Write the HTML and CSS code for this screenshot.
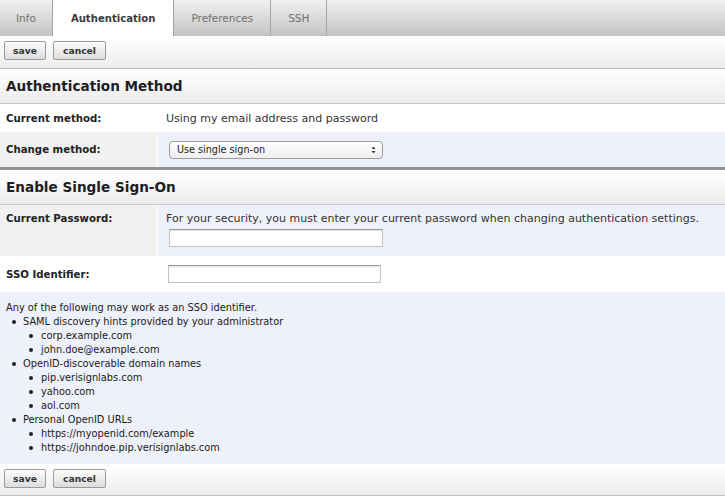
FILE: index.html
```html
<!DOCTYPE html>
<html>
<head>
<meta charset="utf-8">
<link rel="stylesheet" href="styles.css">
</head>
<body>
<div class="tabs">
  <div class="tab">Info</div>
  <div class="tab active">Authentication</div>
  <div class="tab">Preferences</div>
  <div class="tab">SSH</div>
</div>
<div class="bar">
  <button class="btn">save</button>
  <button class="btn">cancel</button>
</div>

<div class="head">Authentication Method</div>
<div class="rows">
  <div class="lbl r-method">Current method:</div>
  <div class="val r-method">Using my email address and password</div>
  <div class="lbl shade r-change">Change method:</div>
  <div class="val blue r-change">
    <div class="select">
      <span>Use single sign-on</span>
      <svg class="arrows" width="5" height="8" viewBox="0 0 5 8"><path d="M0.5 3 L2.5 0.5 L4.5 3 Z M0.5 5 L2.5 7.5 L4.5 5 Z" fill="#444"/></svg>
    </div>
  </div>
</div>
<div class="sep"></div>

<div class="head">Enable Single Sign-On</div>
<div class="rows">
  <div class="lbl shade r-pass">Current Password:</div>
  <div class="val blue r-pass">
    <div class="note">For your security, you must enter your current password when changing authentication settings.</div>
    <input class="field f-pass" type="password">
  </div>
  <div class="lbl r-sso">SSO Identifier:</div>
  <div class="val r-sso"><input class="field f-sso" type="text"></div>
</div>

<div class="info">
  <div>Any of the following may work as an SSO identifier.</div>
  <ul class="l1">
    <li>SAML discovery hints provided by your administrator
      <ul class="l2">
        <li>corp.example.com</li>
        <li>john.doe@example.com</li>
      </ul>
    </li>
    <li>OpenID-discoverable domain names
      <ul class="l2">
        <li>pip.verisignlabs.com</li>
        <li>yahoo.com</li>
        <li>aol.com</li>
      </ul>
    </li>
    <li>Personal OpenID URLs
      <ul class="l2">
        <li>https://myopenid.com/example</li>
        <li>https://johndoe.pip.verisignlabs.com</li>
      </ul>
    </li>
  </ul>
</div>

<div class="bar bottom">
  <button class="btn">save</button>
  <button class="btn">cancel</button>
</div>
</body>
</html>
```

FILE: styles.css
```css
html, body {
  margin: 0;
  padding: 0;
  background: #fff;
}
body {
  font-family: "DejaVu Sans", "Lucida Grande", sans-serif;
  color: #222;
  width: 725px;
}

/* tabs */
.tabs {
  display: flex;
  height: 36px;
  background: linear-gradient(#f1f1f1, #c3c3c3);
}
.tab {
  display: flex;
  align-items: center;
  justify-content: center;
  padding: 0 17px;
  font-size: 10.5px;
  color: #707070;
  border-right: 1px solid #a3a3a3;
}
.tab:first-child {
  padding: 0 16px 0 16px;
}
.tab.active {
  background: #fff;
  color: #3a3a3a;
  font-weight: bold;
  font-size: 10.1px;
  padding: 0 18px;
}

/* button bars */
.bar {
  box-sizing: border-box;
  padding: 5px 4px 0;
  display: flex;
  gap: 7px;
  align-items: flex-start;
  background: linear-gradient(#fff, #ededed);
  border-bottom: 1px solid #bdbdbd;
  height: 33px;
}
.bar.bottom {
  height: 32px;
}
.btn {
  height: 19px;
  margin: 0;
  padding: 0 8px;
  font-family: "DejaVu Sans", sans-serif;
  font-weight: bold;
  font-size: 9.2px;
  color: #333;
  background: linear-gradient(#fdfdfd, #dcdcdc);
  border: 1px solid #9a9a9a;
  border-radius: 2px;
  box-shadow: 0 1px 0 rgba(255,255,255,0.8) inset;
}
.btn:first-child { width: 42px; }
.btn:last-child { width: 53px; }

/* section headers */
.head {
  height: 34px;
  display: flex;
  align-items: center;
  padding-left: 6px;
  font-weight: bold;
  font-size: 13.6px;
  color: #1e1e1e;
  background: linear-gradient(#fff, #ececec);
  border-bottom: 1px solid #c8c8c8;
}

/* form rows */
.rows {
  display: grid;
  grid-template-columns: 157px 1fr;
  column-gap: 1px;
  background: #fff;
}
.lbl {
  padding-left: 6px;
  font-weight: bold;
  font-size: 10.2px;
  color: #222;
  display: flex;
  align-items: center;
}
.val {
  padding-left: 8px;
  font-size: 11px;
  color: #333;
  display: flex;
  align-items: center;
}
.shade { background: #f1f1f1; }
.blue { background: #eef1f9; }
.r-method { height: 28px; }
.r-change { height: 35px; }
.r-pass { height: 51px; align-items: flex-start; }
.lbl.r-pass { padding-top: 7px; box-sizing: border-box; height: 51px; align-items: flex-start; line-height: 14px; }
.val.r-pass { flex-direction: column; padding-top: 7px; box-sizing: border-box; }
.r-sso { height: 36px; }

.note { line-height: 14px; }

.select {
  margin-left: 3px;
  width: 214px;
  height: 18px;
  box-sizing: border-box;
  border: 1px solid #9c9c9c;
  border-radius: 4px;
  background: linear-gradient(#fff, #eeeeee);
  display: flex;
  align-items: center;
  justify-content: space-between;
  padding: 0 6px 0 7px;
  font-size: 9.65px;
  color: #222;
}
.arrows { display: block; }

.field {
  box-sizing: border-box;
  width: 214px;
  height: 18px;
  margin: 0;
  padding: 0;
  background: #fff;
  border: 1px solid #c2c2c2;
  border-top-color: #9a9a9a;
  box-shadow: inset 0 1px 1px rgba(0,0,0,0.12);
}
.f-pass { margin: 3px 0 0 3px; }
.f-sso { margin-left: 2px; width: 213px; }

.sep {
  height: 3px;
  background: #909090;
}

/* info block */
.info {
  background: #eef1f9;
  padding: 9px 6px;
  font-size: 9.8px;
  line-height: 14px;
  color: #1a1a1a;
}
.info ul {
  list-style: none;
  margin: 0;
  padding: 0;
}
.info .l1 { padding-left: 17px; }
.info .l2 { padding-left: 18px; }
.info li { position: relative; }
.info li::before {
  content: "";
  position: absolute;
  top: 5px;
  width: 4px;
  height: 4px;
  border-radius: 50%;
  background: #222;
}
.info .l1 > li::before { left: -11px; }
.info .l2 > li::before { left: -12px; }
```
